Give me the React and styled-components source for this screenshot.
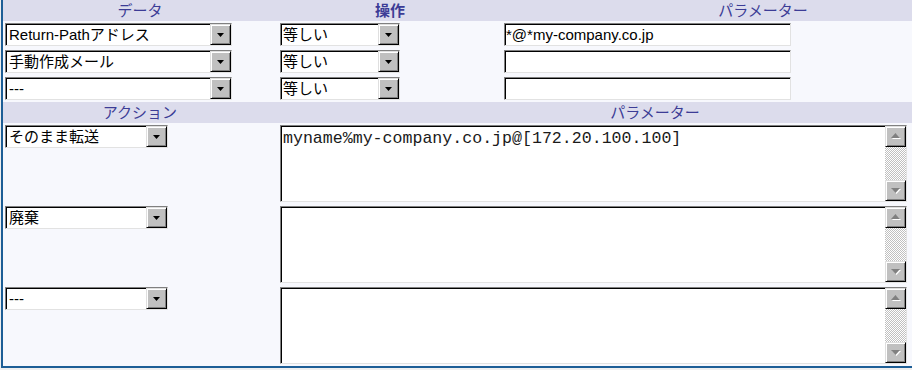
import React from "react";
import styled, { createGlobalStyle } from "styled-components";

const GlobalStyle = createGlobalStyle`
  html, body {
    margin: 0;
    padding: 0;
    background: #efefef;
    overflow: hidden;
  }
  body {
    font-family: "Liberation Sans", "Noto Sans CJK JP", sans-serif;
  }
`;

const Viewport = styled.div`
  width: 100vw;
  overflow: hidden;
`;

const Frame = styled.div`
  margin-left: 1px;
  width: 1030px;
  background: #f7f8fd;
  border-left: 2px solid #1d5e96;
  border-bottom: 2px solid #1d5e96;
`;

const HeaderRow = styled.div`
  display: grid;
  grid-template-columns: ${(p) => p.cols};
  height: 21px;
  align-items: center;
  background: #dcdcec;
`;

const HeadCell = styled.div`
  text-align: center;
  color: #3c3c96;
  font-size: 15px;
  line-height: 21px;
  font-weight: ${(p) => (p.bold ? "bold" : "normal")};
`;

const Row = styled.div`
  display: grid;
  grid-template-columns: ${(p) => p.cols};
  height: ${(p) => p.h}px;
`;

const Cell = styled.div`
  padding-top: 2px;
  padding-left: ${(p) => p.pl}px;
`;

const Sunken = styled.div`
  box-sizing: border-box;
  width: ${(p) => p.w}px;
  height: ${(p) => p.h || 23}px;
  display: flex;
  background: #fff;
  border: 1px solid;
  border-color: #808080 #e2e2e2 #e2e2e2 #808080;
  box-shadow: inset 1px 1px 0 #000;
`;

const FieldText = styled.div`
  flex: 1;
  padding: 1px 0 0 ${(p) => p.pl}px;
  font-size: 15px;
  line-height: 20px;
  color: #000;
  white-space: nowrap;
  overflow: hidden;
`;

const RaisedBtn = styled.div`
  box-sizing: border-box;
  width: 21px;
  height: 21px;
  flex: none;
  display: flex;
  align-items: center;
  justify-content: center;
  background: #c0c0c0;
  border: 1px solid;
  border-color: #dfdfdf #000 #000 #dfdfdf;
  box-shadow: inset 1px 1px 0 #fff, inset -1px -1px 0 #808080;
`;

const MonoText = styled.div`
  flex: 1;
  padding: 3px 2px 0 2px;
  font-family: "Liberation Mono", "Noto Sans CJK JP", monospace;
  font-size: 16.6px;
  line-height: 19px;
  color: #1a1a1a;
  white-space: pre;
  overflow: hidden;
`;

const ScrollBar = styled.div`
  width: 21px;
  flex: none;
  display: flex;
  flex-direction: column;
`;

const Track = styled.div`
  flex: 1;
  background: repeating-conic-gradient(#c0c0c0 0 25%, #fff 0 50%) 0 0 / 2px 2px;
`;

const DropArrow = () => (
  <svg width="7" height="4" viewBox="0 0 7 4">
    <polygon points="0,0 7,0 3.5,4" fill="#000" />
  </svg>
);

const ScrollArrow = ({ down }) => (
  <svg width="11" height="7" viewBox="0 0 11 7">
    {down ? (
      <>
        <polygon points="2,2 11,2 6.5,7" fill="#fff" />
        <polygon points="1,1 10,1 5.5,6" fill="#808080" />
      </>
    ) : (
      <>
        <polygon points="2,6 11,6 6.5,1" fill="#fff" />
        <polygon points="1,5 10,5 5.5,0" fill="#808080" />
      </>
    )}
  </svg>
);

const Select = ({ w, value, pl = 3 }) => (
  <Sunken w={w}>
    <FieldText pl={pl}>{value}</FieldText>
    <RaisedBtn>
      <DropArrow />
    </RaisedBtn>
  </Sunken>
);

const TextInput = ({ w, value }) => (
  <Sunken w={w}>
    <FieldText pl={1}>{value}</FieldText>
  </Sunken>
);

const TextArea = ({ value }) => (
  <Sunken w={627} h={77}>
    <MonoText>{value}</MonoText>
    <ScrollBar>
      <RaisedBtn>
        <ScrollArrow />
      </RaisedBtn>
      <Track />
      <RaisedBtn>
        <ScrollArrow down />
      </RaisedBtn>
    </ScrollBar>
  </Sunken>
);

const conditions = [
  { data: "Return-Pathアドレス", op: "等しい", param: "*@*my-company.co.jp" },
  { data: "手動作成メール", op: "等しい", param: "" },
  { data: "---", op: "等しい", param: "" },
];

const actions = [
  { action: "そのまま転送", param: "myname%my-company.co.jp@[172.20.100.100]" },
  { action: "廃棄", param: "" },
  { action: "---", param: "" },
];

const TOP_COLS = "274px 226px 520px";
const BOTTOM_COLS = "274px 756px";

export default function App() {
  return (
    <>
      <GlobalStyle />
      <Viewport>
        <Frame>
          <HeaderRow cols={TOP_COLS}>
            <HeadCell>データ</HeadCell>
            <HeadCell bold>操作</HeadCell>
            <HeadCell>パラメーター</HeadCell>
          </HeaderRow>
          {conditions.map((c, i) => (
            <Row key={i} cols={TOP_COLS} h={27}>
              <Cell pl={2}>
                <Select w={227} value={c.data} />
              </Cell>
              <Cell pl={3}>
                <Select w={120} value={c.op} pl={2} />
              </Cell>
              <Cell pl={1}>
                <TextInput w={287} value={c.param} />
              </Cell>
            </Row>
          ))}
          <HeaderRow cols={BOTTOM_COLS}>
            <HeadCell>アクション</HeadCell>
            <HeadCell>パラメーター</HeadCell>
          </HeaderRow>
          {actions.map((a, i) => (
            <Row key={i} cols={BOTTOM_COLS} h={81}>
              <Cell pl={2}>
                <Select w={163} value={a.action} />
              </Cell>
              <Cell pl={3}>
                <TextArea value={a.param} />
              </Cell>
            </Row>
          ))}
        </Frame>
      </Viewport>
    </>
  );
}
